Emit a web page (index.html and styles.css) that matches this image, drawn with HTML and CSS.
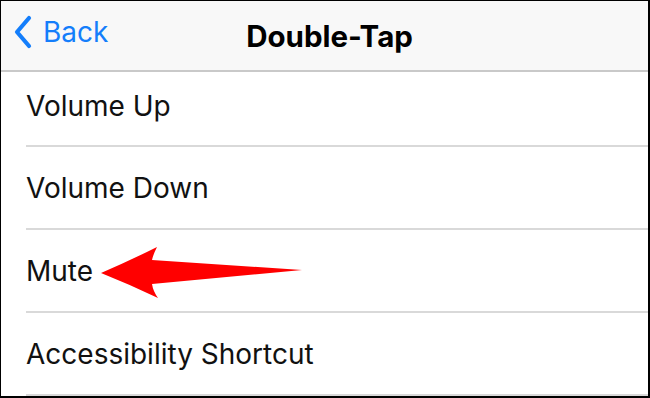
FILE: index.html
```html
<!DOCTYPE html>
<html>
<head>
<meta charset="utf-8">
<link rel="stylesheet" href="styles.css">
</head>
<body>
<div class="screen">
  <header class="navbar">
    <div class="back">
      <svg class="chevron" width="18" height="34" viewBox="0 0 18 34"><path d="M15 3 L3 17 L15 31" fill="none" stroke="#147efb" stroke-width="4.2" stroke-linecap="round" stroke-linejoin="round"/></svg>
      <span class="back-label">Back</span>
    </div>
    <h1 class="title">Double-Tap</h1>
  </header>
  <ul class="list">
    <li class="row row-first"><span class="label">Volume Up</span></li>
    <li class="row"><span class="label">Volume Down</span></li>
    <li class="row row-mute"><span class="label">Mute</span>
      <svg class="arrow" width="210" height="60" viewBox="0 0 210 60"><path d="M0 26 Q30 13 56 0 Q52 8 51 13 L201 23 L51 37 Q52 44 57 51 Q30 38 0 26 Z" fill="#ff0000"/></svg>
    </li>
    <li class="row"><span class="label">Accessibility Shortcut</span></li>
  </ul>
</div>
</body>
</html>
```
FILE: styles.css
```css
html, body {
  margin: 0;
  padding: 0;
  background: #ffffff;
}
.screen {
  width: 650px;
  height: 398px;
  box-sizing: border-box;
  border-style: solid;
  border-color: #000;
  border-width: 1px 2px 2px 1px;
  overflow: hidden;
  font-family: Inter, "Liberation Sans", sans-serif;
  display: flex;
  flex-direction: column;
}
.navbar {
  height: 69px;
  flex: none;
  background: #f8f8f8;
  border-bottom: 2px solid #c9c9c9;
  display: flex;
  align-items: center;
  justify-content: center;
  position: relative;
}
.back {
  position: absolute;
  left: 13px;
  top: 14px;
  display: flex;
  align-items: center;
  gap: 11px;
}
.chevron {
  display: block;
}
.back-label {
  color: #147efb;
  font-size: 28px;
  letter-spacing: 0;
}
.title {
  margin: 0 0 0 10px;
  font-size: 29.5px;
  font-weight: 700;
  color: #000;
  letter-spacing: 0;
}
.list {
  list-style: none;
  margin: 0;
  padding: 0 0 0 25px;
}
.row {
  height: 83px;
  box-sizing: border-box;
  border-bottom: 2px solid #d9d9d9;
  display: flex;
  align-items: center;
  gap: 8px;
}
.row-first {
  height: 75px;
  padding-bottom: 6px;
}
.label {
  font-size: 28px;
  color: #111;
  letter-spacing: 0;
}
.arrow {
  display: block;
  margin-top: 12px;
}
```
